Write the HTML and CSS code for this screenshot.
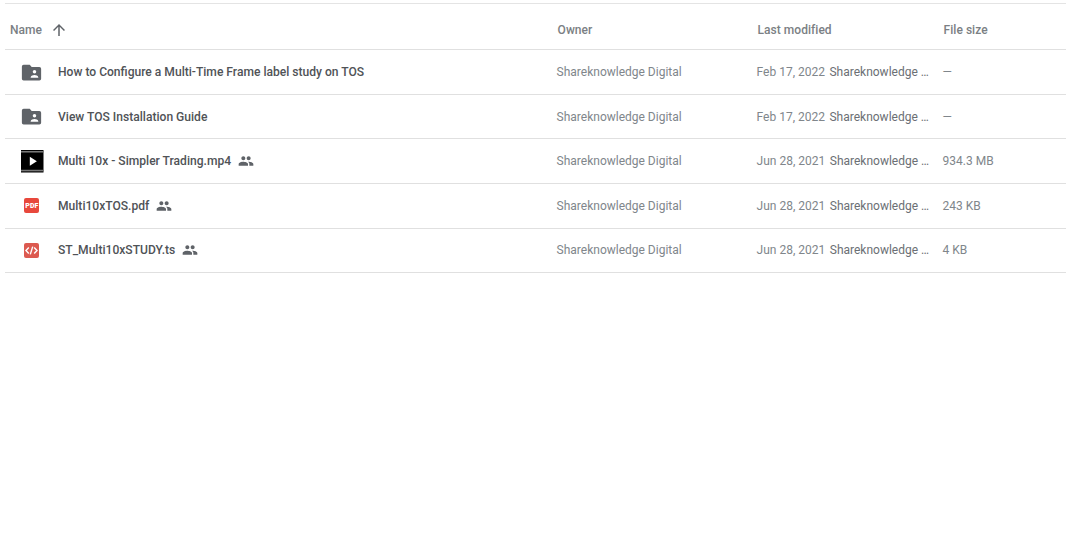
FILE: index.html
```html
<!DOCTYPE html>
<html lang="en">
<head>
<meta charset="utf-8">
<title>Files</title>
<link rel="stylesheet" href="styles.css">
</head>
<body>
<main class="list">
  <div class="row head">
    <div class="name-cell"><span class="head-name">Name</span>
      <svg class="sort" viewBox="0 0 24 24"><path d="M4 12l1.41 1.41L11 7.83V20h2V7.83l5.58 5.59L20 12l-8-8-8 8z"/></svg>
    </div>
    <div class="owner">Owner</div>
    <div class="modified">Last modified</div>
    <div class="size">File size</div>
  </div>

  <div class="row">
    <div class="name-cell">
      <span class="icon"><svg class="folder" viewBox="0 0 24 24"><path d="M3 3h7l2.2 2.6H21a2 2 0 0 1 2 2V19a2 2 0 0 1-2 2H3a2 2 0 0 1-2-2V5a2 2 0 0 1 2-2z"/><circle class="hole" cx="15.4" cy="11" r="2"/><path class="hole" d="M11 17.6c0-1.9 2.9-2.8 4.4-2.8s4.4.9 4.4 2.8v.5H11z"/></svg></span>
      <span class="title">How to Configure a Multi-Time Frame label study on TOS</span>
    </div>
    <div class="owner">Shareknowledge Digital</div>
    <div class="modified"><span class="date">Feb 17, 2022</span><span class="by">Shareknowledge …</span></div>
    <div class="size">—</div>
  </div>

  <div class="row">
    <div class="name-cell">
      <span class="icon"><svg class="folder" viewBox="0 0 24 24"><path d="M3 3h7l2.2 2.6H21a2 2 0 0 1 2 2V19a2 2 0 0 1-2 2H3a2 2 0 0 1-2-2V5a2 2 0 0 1 2-2z"/><circle class="hole" cx="15.4" cy="11" r="2"/><path class="hole" d="M11 17.6c0-1.9 2.9-2.8 4.4-2.8s4.4.9 4.4 2.8v.5H11z"/></svg></span>
      <span class="title">View TOS Installation Guide</span>
    </div>
    <div class="owner">Shareknowledge Digital</div>
    <div class="modified"><span class="date">Feb 17, 2022</span><span class="by">Shareknowledge …</span></div>
    <div class="size">—</div>
  </div>

  <div class="row">
    <div class="name-cell">
      <span class="icon"><svg class="thumb" viewBox="0 0 23 23"><rect width="23" height="23" fill="#000"/><rect y="1" width="23" height="1.6" fill="#777"/><rect y="20.2" width="23" height="1.6" fill="#777"/><path d="M9 6.8l7.2 4.7L9 16.2z" fill="#fff"/></svg></span>
      <span class="title">Multi 10x - Simpler Trading.mp4</span>
      <svg class="shared" viewBox="0 0 24 24"><path d="M16 11c1.66 0 2.99-1.34 2.99-3S17.66 5 16 5s-3 1.34-3 3 1.34 3 3 3zm-8 0c1.66 0 2.99-1.34 2.99-3S9.66 5 8 5 5 6.34 5 8s1.34 3 3 3zm0 2c-2.33 0-7 1.17-7 3.5V19h14v-2.5C15 14.17 10.33 13 8 13zm8 0c-.29 0-.62.02-.97.05 1.16.84 1.97 1.97 1.97 3.45V19h6v-2.5c0-2.33-4.67-3.5-7-3.5z"/></svg>
    </div>
    <div class="owner">Shareknowledge Digital</div>
    <div class="modified"><span class="date">Jun 28, 2021</span><span class="by">Shareknowledge …</span></div>
    <div class="size">934.3 MB</div>
  </div>

  <div class="row">
    <div class="name-cell">
      <span class="icon"><span class="badge pdf">PDF</span></span>
      <span class="title">Multi10xTOS.pdf</span>
      <svg class="shared" viewBox="0 0 24 24"><path d="M16 11c1.66 0 2.99-1.34 2.99-3S17.66 5 16 5s-3 1.34-3 3 1.34 3 3 3zm-8 0c1.66 0 2.99-1.34 2.99-3S9.66 5 8 5 5 6.34 5 8s1.34 3 3 3zm0 2c-2.33 0-7 1.17-7 3.5V19h14v-2.5C15 14.17 10.33 13 8 13zm8 0c-.29 0-.62.02-.97.05 1.16.84 1.97 1.97 1.97 3.45V19h6v-2.5c0-2.33-4.67-3.5-7-3.5z"/></svg>
    </div>
    <div class="owner">Shareknowledge Digital</div>
    <div class="modified"><span class="date">Jun 28, 2021</span><span class="by">Shareknowledge …</span></div>
    <div class="size">243 KB</div>
  </div>

  <div class="row">
    <div class="name-cell">
      <span class="icon"><span class="badge code"><svg viewBox="0 0 15 15"><path d="M4.8 4.6L2 7.5l2.8 2.9M10.2 4.6L13 7.5l-2.8 2.9M8.7 3.6L6.3 11.4" fill="none" stroke="#fff" stroke-width="1.4"/></svg></span></span>
      <span class="title">ST_Multi10xSTUDY.ts</span>
      <svg class="shared" viewBox="0 0 24 24"><path d="M16 11c1.66 0 2.99-1.34 2.99-3S17.66 5 16 5s-3 1.34-3 3 1.34 3 3 3zm-8 0c1.66 0 2.99-1.34 2.99-3S9.66 5 8 5 5 6.34 5 8s1.34 3 3 3zm0 2c-2.33 0-7 1.17-7 3.5V19h14v-2.5C15 14.17 10.33 13 8 13zm8 0c-.29 0-.62.02-.97.05 1.16.84 1.97 1.97 1.97 3.45V19h6v-2.5c0-2.33-4.67-3.5-7-3.5z"/></svg>
    </div>
    <div class="owner">Shareknowledge Digital</div>
    <div class="modified"><span class="date">Jun 28, 2021</span><span class="by">Shareknowledge …</span></div>
    <div class="size">4 KB</div>
  </div>
</main>
</body>
</html>
```

FILE: styles.css
```css
html, body {
  margin: 0;
  height: 100%;
  background: #fff;
  overflow: hidden;
}
body {
  font-family: Roboto, "Liberation Sans", sans-serif;
  font-size: 12px;
  color: #80868b;
}
.list {
  margin: 3px 0 0 5px;
  border-top: 1px solid #e4e4e4;
}
.row {
  display: grid;
  grid-template-columns: 551.6px 200px 186px 1fr;
  align-items: center;
  height: 44.6px;
  box-sizing: border-box;
  border-bottom: 1px solid #e0e0e0;
}
.head {
  height: 46.3px;
  padding-top: 6px;
  font-weight: 500;
  letter-spacing: .03px;
  color: #7b7f84;
}
.head .owner, .head .modified, .head .size { padding-left: 1px; }
.name-cell {
  display: flex;
  align-items: center;
  min-width: 0;
}
.head-name { margin-left: 5px; }
.sort {
  width: 18px;
  height: 18px;
  margin-left: 8px;
  fill: #5f6368;
}
.icon {
  width: 53px;
  padding-left: 15px;
  box-sizing: border-box;
  display: flex;
  align-items: center;
  flex: none;
}
.folder {
  width: 21px;
  height: 21px;
  margin-left: 1px;
  fill: #5f6368;
}
.folder .hole { fill: #fff; }
.thumb {
  width: 22.5px;
  height: 22.5px;
  margin-left: 1px;
  display: block;
}
.badge {
  width: 15px;
  height: 15px;
  margin-left: 4.3px;
  border-radius: 2px;
  display: flex;
  align-items: center;
  justify-content: center;
  color: #fff;
}
.pdf {
  background: #e8483c;
  font-size: 7px;
  font-weight: 900;
  letter-spacing: 0;
}
.code { background: #dc5a50; }
.code svg { width: 15px; height: 15px; display: block; }
.title {
  color: #505357;
  font-weight: 500;
  font-size: 12.08px;
  white-space: nowrap;
}
.shared {
  width: 16px;
  height: 16px;
  margin-left: 7px;
  fill: #5f6368;
}
.date { margin-right: 4.5px; }
.by { color: #6b6f74; white-space: nowrap; }
```
